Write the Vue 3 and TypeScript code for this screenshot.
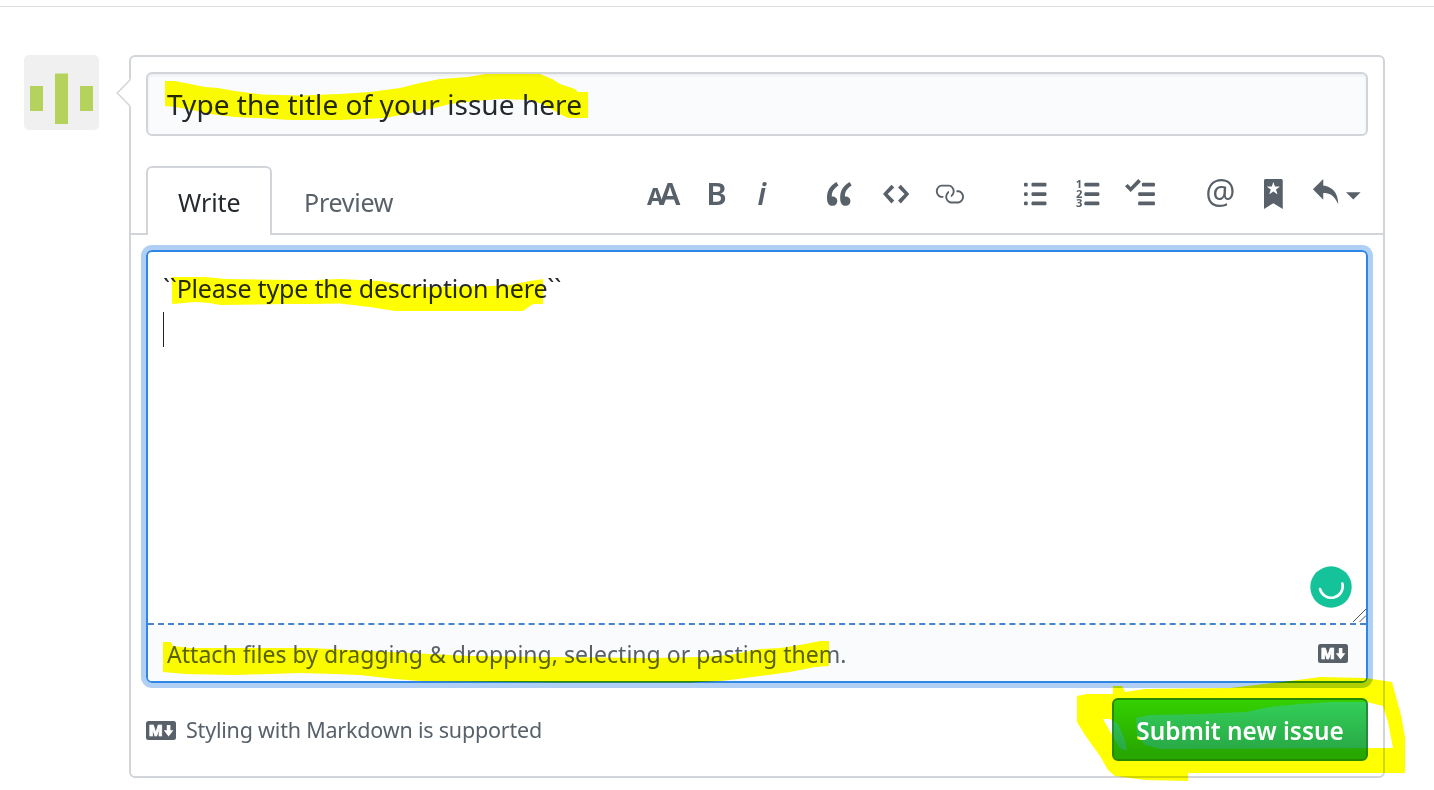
<script setup lang="ts">
interface Glyph {
  x: number
  y: number
  value: string
  cls: string
}

interface ToolIcon {
  name: string
  width: number
  paths?: string[]
  text?: Glyph[]
}

const icons: ToolIcon[] = [
  {
    name: 'heading',
    width: 18,
    text: [
      { x: 0, y: 14, value: 'A', cls: 'glyph-small' },
      { x: 6.6, y: 14, value: 'A', cls: 'glyph-big' },
    ],
  },
  { name: 'bold', width: 10, text: [{ x: -0.4, y: 14, value: 'B', cls: 'glyph-big' }] },
  { name: 'italic', width: 6, text: [{ x: 0.3, y: 14, value: 'i', cls: 'glyph-italic' }] },
  {
    name: 'quote',
    width: 14,
    paths: [
      'M6.16 3.5C3.73 5.06 2.55 6.67 2.55 9.36c.16-.05.3-.05.44-.05 1.27 0 2.5.86 2.5 2.41 0 1.61-1.03 2.61-2.5 2.61-1.9 0-2.99-1.52-2.99-4.25 0-3.8 1.75-6.53 5.02-8.42L6.16 3.5zm7 0c-2.43 1.56-3.61 3.17-3.61 5.86.16-.05.3-.05.44-.05 1.27 0 2.5.86 2.5 2.41 0 1.61-1.03 2.61-2.5 2.61-1.89 0-2.98-1.52-2.98-4.25 0-3.8 1.75-6.53 5.02-8.42l1.14 1.84h-.01z',
    ],
  },
  {
    name: 'code',
    width: 14,
    paths: ['M9.5 3L8 4.5 11.5 8 8 11.5 9.5 13 14 8 9.5 3zm-5 0L0 8l4.5 5L6 11.5 2.5 8 6 4.5 4.5 3z'],
  },
  {
    name: 'link',
    width: 16,
    paths: [
      'M4 9h1v1H4c-1.5 0-3-1.69-3-3.5S2.55 3 4 3h4c1.45 0 3 1.69 3 3.5 0 1.41-.91 2.72-2 3.25V8.59c.58-.45 1-1.27 1-2.09C10 5.22 8.98 4 8 4H4c-.98 0-2 1.22-2 2.5S3 9 4 9zm9-3h-1v1h1c1 0 2 1.22 2 2.5S13.98 12 13 12H9c-.98 0-2-1.22-2-2.5 0-.83.42-1.64 1-2.09V6.25c-1.09.53-2 1.84-2 3.25C6 11.31 7.55 13 9 13h4c1.45 0 3-1.69 3-3.5S14.5 6 13 6z',
    ],
  },
  {
    name: 'bullets',
    width: 12,
    paths: [
      'M2 13c0 .59 0 1-.59 1H.59C0 14 0 13.59 0 13c0-.59 0-1 .59-1h.81c.59 0 .59.41.59 1H2zm2.59-9h6.81c.59 0 .59-.41.59-1 0-.59 0-1-.59-1H4.59C4 2 4 2.41 4 3c0 .59 0 1 .59 1zM1.41 7H.59C0 7 0 7.41 0 8c0 .59 0 1 .59 1h.81c.59 0 .59-.41.59-1 0-.59 0-1-.59-1h.01zm0-5H.59C0 2 0 2.41 0 3c0 .59 0 1 .59 1h.81c.59 0 .59-.41.59-1 0-.59 0-1-.59-1h.01zm10 5H4.59C4 7 4 7.41 4 8c0 .59 0 1 .59 1h6.81c.59 0 .59-.41.59-1 0-.59 0-1-.59-1h.01zm0 5H4.59C4 12 4 12.41 4 13c0 .59 0 1 .59 1h6.81c.59 0 .59-.41.59-1 0-.59 0-1-.59-1h.01z',
    ],
  },
  {
    name: 'numbers',
    width: 13,
    paths: [
      'M5 2h7q.5 0 .5 1t-.5 1H5q-.6 0-.6-1t.6-1z',
      'M5 7h7q.5 0 .5 1t-.5 1H5q-.6 0-.6-1t.6-1z',
      'M5 12h7q.5 0 .5 1t-.5 1H5q-.6 0-.6-1t.6-1z',
    ],
    text: [
      { x: -0.1, y: 4.9, value: '1', cls: 'glyph-number' },
      { x: 0, y: 9.9, value: '2', cls: 'glyph-number' },
      { x: 0, y: 14.9, value: '3', cls: 'glyph-number' },
    ],
  },
  {
    name: 'tasks',
    width: 16,
    paths: [
      'M15.41 9H7.59C7 9 7 8.59 7 8c0-.59 0-1 .59-1h7.81c.59 0 .59.41.59 1 0 .59 0 1-.59 1h.01zM9.59 4C9 4 9 3.59 9 3c0-.59 0-1 .59-1h5.81c.59 0 .59.41.59 1 0 .59 0 1-.59 1H9.59zM0 3.91l1.41-1.3L3 4.2 7.09 0 8.5 1.41 3 6.91l-3-3zM7.59 12h7.81c.59 0 .59.41.59 1 0 .59 0 1-.59 1H7.59C7 14 7 13.59 7 13c0-.59 0-1 .59-1z',
    ],
  },
  { name: 'mention', width: 14, text: [{ x: -0.9, y: 13.3, value: '@', cls: 'glyph-at' }] },
  {
    name: 'bookmark',
    width: 10,
    paths: [
      'M9 0H1C.27 0 0 .27 0 1v15l5-3.09L10 16V1c0-.73-.27-1-1-1zm-.78 4.25L6.36 5.61l.72 2.16c.06.22-.02.28-.2.17L5 6.6 3.12 7.94c-.19.11-.25.05-.2-.17l.72-2.16-1.86-1.36c-.17-.16-.14-.23.09-.23l2.3-.03.7-2.16h.25l.7 2.16 2.3.03c.23 0 .27.08.09.23h.01z',
    ],
  },
  { name: 'reply', width: 14, paths: ['M6 3.5c3.92.44 8 3.125 8 10-2.312-5.062-4.75-6-8-6V11L.5 5.5 6 0v3.5z'] },
  { name: 'caret', width: 8, paths: ['M0 7h7.8L3.9 10.9z'] },
]

const unit = 1.875

const strokes: string[] = [
  'M165 81L175 81 190 84 205 87 218 88 235 91 262 94.5 300 95.5 340 94 370 92 400 88 420 83 440 79 468 77 485 74 540 74 552 79 560 84 575 89 578 92 588 92 588 118 568 118 558 113 545 105 530 100 500 99 475 101 450 104 430 109 400 115 385 118 340 120 290 120 258 118 235 117 210 114 192 110 175 107 165 106Z',
  'M172 277L205 277 225 279 290 280 315 280 340 279 380 281 405 285 425 287 490 286 510 285 530 281 543 279 543 304 533 304 523 311 395 311 370 307 340 303.5 310 304 285 304 220 305 210 303 195 302 172 304Z',
  'M163 642L171 642 173 646 190 648 310 648 350 650 410 653 470 656 550 657 650 658 700 657 730 655 760 649 780 648 800 645 820 641 829 641 829 666 815 667 790 672 760 676 730 680 720 681 690 682.5 560 682.5 420 681 395 679 360 675 335 674 300 673 235 675 185 674 163 672Z',
  'M1077 696L1087 694 1113 694 1113 686 1122 686 1125 692 1145 689 1230 688 1290 681 1320 677 1365 678 1392 682 1395 693 1401 715 1405 737 1405 773 1188 773 1188 781 1145 780 1115 776 1108 770 1100 756 1085 735 1077 722ZM1103 719L1110 719 1118 724 1125 740 1127 751 1120 748 1112 735ZM1136 718L1150 715 1200 714 1245 712 1270 707 1300 704 1330 702 1367 702 1383 706 1388 722 1393 748 1160 749 1145 745 1137 735Z',
]
</script>

<template>
  <div class="page">
    <div class="rule"></div>
    <main class="thread">
      <svg class="avatar" viewBox="0 0 75 75">
        <rect width="75" height="75" rx="5" fill="#f0f0f0" />
        <path d="M6 31h13v25H6zM31 18.5h13V69H31zM56 31h13v25H56z" fill="#b5d35c" />
      </svg>
      <section class="composer">
        <svg class="pointer" viewBox="0 0 15 28">
          <path d="M15 0L1.2 14 15 28z" fill="#fff" />
          <path d="M14 1L1.2 14 14 27" fill="none" stroke="#d1d5da" stroke-width="1.5" />
        </svg>
        <div class="title">Type the title of your issue here</div>
        <div class="tabs">
          <div class="tab active">Write</div>
          <div class="tab">Preview</div>
          <div class="toolbar">
            <svg
              v-for="icon in icons"
              :key="icon.name"
              :class="['tool', icon.name]"
              :width="icon.width * unit"
              height="30"
              :viewBox="`0 0 ${icon.width} 16`"
            >
              <path v-for="d in icon.paths" :key="d" :d="d" fill-rule="evenodd" />
              <text v-if="icon.text">
                <tspan v-for="t in icon.text" :key="t.value + t.x" :x="t.x" :y="t.y" :class="t.cls">{{ t.value }}</tspan>
              </text>
            </svg>
          </div>
        </div>
        <div class="editor">
          <div class="body">
            <div class="body-text">``Please type the description here``</div>
            <div class="cursor"></div>
            <svg class="assistant" viewBox="0 0 42 42">
              <circle cx="21" cy="21" r="20.7" fill="#15c39a" />
              <path d="M10 23a11.3 11.3 0 0 0 22.4-5.5" fill="none" stroke="#fff" stroke-width="2.6" stroke-linecap="round" />
            </svg>
            <svg class="grip" viewBox="0 0 13 13"><path d="M0 13L13 0M6.5 13L13 6.5" stroke="#555" /></svg>
          </div>
          <div class="attach">
            <span>Attach files by dragging &amp; dropping, selecting or pasting them.</span>
            <svg class="markdown" viewBox="0 0 30 19">
              <rect width="30" height="19" rx="2.5" />
              <text x="2.9" y="15.2">M</text>
              <path d="M20.8 4h3.6v5.3h3L22.6 15.5 17.8 9.3h3z" />
            </svg>
          </div>
        </div>
        <footer class="footer">
          <svg class="markdown" viewBox="0 0 30 19">
            <rect width="30" height="19" rx="2.5" />
            <text x="2.9" y="15.2">M</text>
            <path d="M20.8 4h3.6v5.3h3L22.6 15.5 17.8 9.3h3z" />
          </svg>
          <span class="hint">Styling with Markdown is supported</span>
          <button class="submit" type="button">Submit new issue</button>
        </footer>
      </section>
    </main>
    <svg class="marker" viewBox="0 0 1434 790">
      <path v-for="d in strokes" :key="d" :d="d" fill="#ff0" fill-rule="evenodd" />
    </svg>
  </div>
</template>

<style>
body {
  background: #fff;
}
</style>

<style scoped>
.page {
  position: relative;
  width: 1434px;
  height: 790px;
  overflow: hidden;
  isolation: isolate;
  box-sizing: border-box;
  background: #fff;
  color: #24292e;
  font-family: 'Noto Sans', 'Open Sans', sans-serif;
  font-weight: 400;
  padding-top: 6px;
}
.page * {
  box-sizing: border-box;
}
.rule {
  height: 1px;
  background: #dcdcdc;
}
.thread {
  display: flex;
  align-items: flex-start;
  padding: 48px 0 0 24px;
}
.avatar {
  width: 75px;
  height: 75px;
  margin-right: 30px;
}
.composer {
  position: relative;
  width: 1256px;
  height: 723px;
  border: 2px solid #d1d5da;
  border-radius: 6px;
  padding-top: 15px;
}
.pointer {
  position: absolute;
  left: -15px;
  top: 22px;
  width: 15px;
  height: 28px;
}
.title {
  margin: 0 15px;
  height: 64px;
  border: 2px solid #d1d5da;
  border-radius: 6px;
  background: #fafbfc;
  box-shadow: inset 0 2px 3px rgba(27, 31, 35, 0.06);
  padding-left: 19px;
  line-height: 61px;
  font-size: 28px;
  letter-spacing: 0.05px;
  white-space: nowrap;
}
.tabs {
  display: flex;
  height: 99px;
  padding: 30px 15px 0;
  border-bottom: 2px solid #d1d5da;
}
.tab {
  height: 69px;
  width: 126px;
  padding-left: 32px;
  line-height: 72px;
  font-size: 25px;
  letter-spacing: -0.25px;
  color: #586069;
  white-space: nowrap;
}
.tab.active {
  background: #fff;
  border: 2px solid #d1d5da;
  border-bottom: 0;
  border-radius: 6px 6px 0 0;
  padding-left: 30px;
  line-height: 68px;
  letter-spacing: -0.1px;
  color: #24292e;
}
.toolbar {
  display: flex;
  margin: 13px 0 0 249px;
}
.tool {
  flex: none;
  overflow: visible;
  fill: #586069;
}
.bold { margin-left: 26px; }
.italic { margin-left: 31px; }
.quote { margin-left: 59px; }
.code { margin-left: 30px; }
.link { margin-left: 25px; }
.bullets { margin-left: 60px; }
.numbers { margin-left: 29px; }
.tasks { margin-left: 25px; }
.mention { margin-left: 52px; }
.bookmark { margin-left: 31px; }
.reply { margin-left: 29px; }
.caret { margin-left: 8px; }
.glyph-big {
  font: 600 16.6px 'Noto Sans', sans-serif;
}
.glyph-small {
  font: 700 12.8px 'Noto Sans', sans-serif;
}
.glyph-italic {
  font: italic 600 16.2px 'Noto Sans', sans-serif;
}
.glyph-number {
  font: 700 6px 'Noto Sans', sans-serif;
}
.glyph-at {
  font: 400 18px 'Open Sans', sans-serif;
}
.editor {
  margin: 15px 15px 0;
  height: 433px;
  border: 2px solid #2f86e5;
  border-radius: 6px;
  box-shadow: 0 0 0 5px #b0cff4;
}
.body {
  position: relative;
  height: 373px;
  padding: 20px 0 0 15px;
  border-bottom: 2px dashed #4584d0;
}
.body-text {
  height: 40px;
  line-height: 33px;
  font-size: 25px;
  letter-spacing: -0.19px;
  white-space: nowrap;
}
.cursor {
  width: 1px;
  height: 35px;
  background: #222;
}
.assistant {
  position: absolute;
  right: 14px;
  bottom: 15px;
  width: 42px;
  height: 42px;
}
.grip {
  position: absolute;
  right: 0;
  bottom: 1px;
  width: 13px;
  height: 13px;
}
.attach {
  display: flex;
  justify-content: space-between;
  height: 56px;
  padding: 0 18px 0 19px;
  background: #fafbfc;
  border-radius: 0 0 4px 4px;
  line-height: 59px;
  font-size: 23px;
  letter-spacing: 0.03px;
  color: #586069;
  white-space: nowrap;
}
.markdown {
  flex: none;
  width: 30px;
  height: 19px;
  fill: #586069;
}
.markdown text {
  font: 900 15.5px Roboto, sans-serif;
  fill: #fff;
  stroke: #fff;
  stroke-width: 0.7;
}
.markdown path {
  fill: #fff;
}
.attach .markdown {
  margin-top: 19px;
}
.footer {
  display: flex;
  align-items: flex-start;
  padding: 15px 15px 0;
  font-size: 21.5px;
  color: #586069;
  white-space: nowrap;
}
.footer .markdown {
  margin-top: 23px;
}
.hint {
  margin-left: 10px;
  line-height: 64px;
  letter-spacing: -0.2px;
}
.submit {
  width: 256px;
  height: 63px;
  margin-left: auto;
  padding: 1px 0 0;
  border: 2px solid #258a3c;
  border-radius: 6px;
  background: linear-gradient(#34d058, #28a745 90%);
  color: #fff;
  font: 600 24.4px/60px 'Noto Sans', sans-serif;
  white-space: nowrap;
}
.marker {
  position: absolute;
  inset: 0;
  width: 1434px;
  height: 790px;
  mix-blend-mode: multiply;
  pointer-events: none;
}
</style>
